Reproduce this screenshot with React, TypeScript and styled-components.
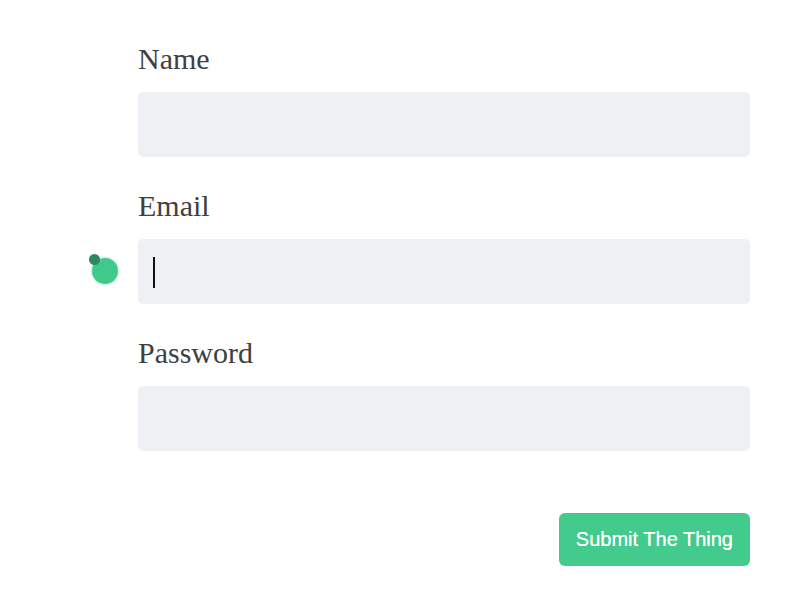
import React from "react";
import styled, { createGlobalStyle } from "styled-components";

const Global = createGlobalStyle`
  html, body { margin: 0; padding: 0; background: #ffffff; }
  body { font-family: "Liberation Serif", "Times New Roman", serif; }
  * { box-sizing: border-box; }
`;

const Form = styled.form`
  display: flex;
  flex-direction: column;
  width: 750px;
  padding: 42px 0 0 138px;
`;

const Field = styled.div`
  display: flex;
  flex-direction: column;
  gap: 16px;
  margin-bottom: 32px;
`;

const Label = styled.label`
  font-family: "Liberation Serif", "Times New Roman", serif;
  font-size: 30px;
  line-height: 34px;
  color: #404040;
`;

const InputWrap = styled.div`
  position: relative;
`;

const Input = styled.input`
  display: block;
  width: 612px;
  height: 65px;
  border: none;
  border-radius: 5px;
  background: #eff0f4;
  padding: 0 15px;
  font-size: 22px;
  font-family: "Liberation Sans", Arial, sans-serif;
  outline: none;
`;

const Caret = styled.span`
  position: absolute;
  left: 15px;
  top: 18px;
  width: 1.5px;
  height: 31px;
  background: #111;
`;

const Dot = styled.span`
  position: absolute;
  left: -46px;
  top: 19px;
  width: 26px;
  height: 26px;
  border-radius: 50%;
  background: #3fca8b;
  box-shadow: 0 0 0 1.5px rgba(220, 240, 232, 0.9);
`;

const Pin = styled.span`
  position: absolute;
  left: -49px;
  top: 15px;
  width: 11px;
  height: 11px;
  border-radius: 50%;
  background: #2c8a5f;
`;

const Actions = styled.div`
  display: flex;
  justify-content: flex-end;
  margin-top: 30px;
`;

const Button = styled.button`
  height: 53px;
  padding: 0 17px;
  border: none;
  border-radius: 6px;
  background: #42cb8c;
  color: #ffffff;
  font-family: "Liberation Sans", Arial, sans-serif;
  font-size: 20px;
  text-shadow: 0 0 0.4px #ffffff;
  cursor: pointer;
`;

export default function App() {
  return (
    <>
      <Global />
      <Form onSubmit={(e) => e.preventDefault()}>
        <Field>
          <Label htmlFor="name">Name</Label>
          <InputWrap>
            <Input id="name" type="text" />
          </InputWrap>
        </Field>
        <Field>
          <Label htmlFor="email">Email</Label>
          <InputWrap>
            <Input id="email" type="email" />
            <Caret />
            <Dot />
            <Pin />
          </InputWrap>
        </Field>
        <Field>
          <Label htmlFor="password">Password</Label>
          <InputWrap>
            <Input id="password" type="password" />
          </InputWrap>
        </Field>
        <Actions>
          <Button type="submit">Submit The Thing</Button>
        </Actions>
      </Form>
    </>
  );
}
